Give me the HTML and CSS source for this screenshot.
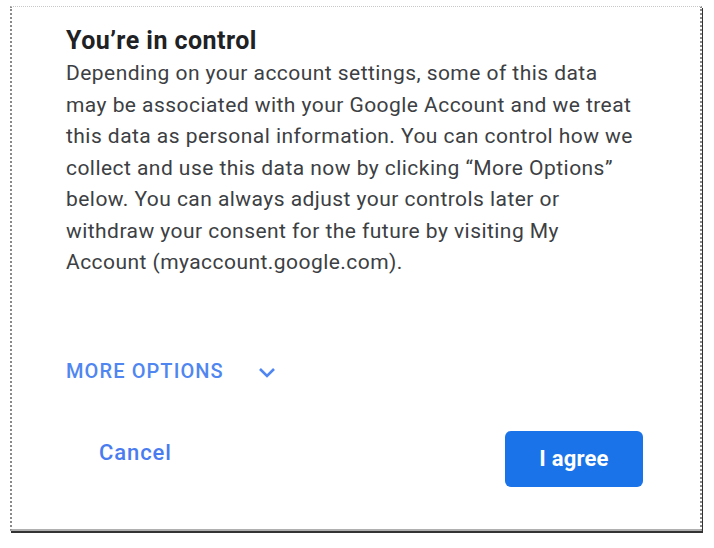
FILE: index.html
```html
<!DOCTYPE html>
<html>
<head>
<meta charset="utf-8">
<link rel="stylesheet" href="styles.css">
</head>
<body>
<div class="frame">
  <div class="dialog">
    <h1 class="title">You’re in control</h1>
    <p class="body">Depending on your account settings, some of this data may be associated with your Google Account and we treat this data as personal information. You can control how we collect and use this data now by clicking “More Options” below. You can always adjust your controls later or withdraw your consent for the future by visiting My Account (myaccount.google.com).</p>
    <div class="more">
      <span class="more-label">MORE OPTIONS</span>
      <svg class="chev" width="18" height="12" viewBox="0 0 18 12"><path d="M2 2 L9 9 L16 2" fill="none" stroke="#4f86f0" stroke-width="2.6"/></svg>
    </div>
    <div class="actions">
      <span class="cancel">Cancel</span>
      <span class="agree">I agree</span>
    </div>
  </div>
</div>
</body>
</html>
```

FILE: styles.css
```css
html, body {
  margin: 0;
  padding: 0;
  background: #ffffff;
}
body {
  width: 714px;
  height: 548px;
  overflow: hidden;
  font-family: Roboto, "Liberation Sans", sans-serif;
}
.frame {
  margin: 6px 0 0 10px;
  width: 688px;
  height: 522px;
  border-top: 1px dotted #c8c8c8;
  border-left: 2px dotted #8a8a8a;
  border-right: 2px dotted #8a8a8a;
  border-bottom: 2px solid #b0b0b0;
  box-shadow: 1px 2px 0 #333;
  box-sizing: content-box;
}
.dialog {
  padding: 19px 0 0 54px;
}
.title {
  margin: 0;
  font-size: 25px;
  font-weight: 700;
  color: #202124;
  line-height: 30px;
  letter-spacing: 0.45px;
}
.body {
  margin: 2px 0 0 0;
  width: 572px;
  font-size: 21px;
  line-height: 31.5px;
  color: #3c4043;
  letter-spacing: 0.45px;
}
.more {
  margin-top: 80px;
  height: 24px;
  display: flex;
  align-items: center;
  gap: 34px;
}
.more-label {
  font-size: 20px;
  font-weight: 500;
  color: #4f86f0;
  letter-spacing: 1.1px;
  line-height: 24px;
}
.chev {
  margin-top: 4px;
}
.actions {
  margin-top: 48px;
  display: flex;
  align-items: center;
  justify-content: space-between;
  width: 577px;
}
.cancel {
  margin-left: 33px;
  margin-top: -12px;
  font-size: 22px;
  font-weight: 500;
  color: #4a7cf0;
  letter-spacing: 0.9px;
}
.agree {
  width: 138px;
  height: 56px;
  border-radius: 6px;
  background: #1a73e8;
  color: #fff;
  font-size: 22px;
  font-weight: 700;
  letter-spacing: 0.2px;
  display: flex;
  align-items: center;
  justify-content: center;
}
```
